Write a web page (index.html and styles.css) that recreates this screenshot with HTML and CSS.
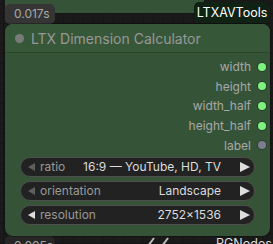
FILE: index.html
```html
<!DOCTYPE html>
<html lang="en">
<head>
    <meta charset="UTF-8">
    <meta name="viewport" content="width=device-width, initial-scale=1.0">
    <title>LTX Dimension Calculator</title>
    <link rel="stylesheet" href="styles.css">
</head>
<body>
    <div class="canvas">
        <div class="node node-above"></div>
        <div class="timing timing-top">0.017s</div>
        <div class="pack-badge">LTXAVTools</div>

        <div class="timing timing-bottom">0.005s</div>
        <div class="pack-label">RGNodes</div>
        <svg class="links" width="40" height="10" viewBox="0 0 40 10">
            <line x1="2" y1="10" x2="8" y2="2" />
            <line x1="16" y1="10" x2="22" y2="2" />
        </svg>

        <div class="node main-node">
            <div class="node-title">
                <span class="title-dot"></span>
                <span>LTX Dimension Calculator</span>
            </div>
            <div class="outputs">
                <div class="output-row"><span>width</span><span class="slot"></span></div>
                <div class="output-row"><span>height</span><span class="slot"></span></div>
                <div class="output-row"><span>width_half</span><span class="slot"></span></div>
                <div class="output-row"><span>height_half</span><span class="slot"></span></div>
                <div class="output-row"><span>label</span><span class="slot slot-string"></span></div>
            </div>
            <div class="widgets">
                <div class="widget">
                    <svg class="arrow-left dim" width="7" height="8" viewBox="0 0 7 8"><polygon points="7,0 7,8 0,4" /></svg>
                    <span class="widget-label">ratio</span>
                    <span class="widget-value">16:9 — YouTube, HD, TV</span>
                    <svg class="arrow-right" width="10" height="10" viewBox="0 0 10 10"><polygon points="0,0 10,5 0,10" /></svg>
                </div>
                <div class="widget">
                    <svg class="arrow-left dim" width="7" height="8" viewBox="0 0 7 8"><polygon points="7,0 7,8 0,4" /></svg>
                    <span class="widget-label">orientation</span>
                    <span class="widget-value">Landscape</span>
                    <svg class="arrow-right" width="10" height="10" viewBox="0 0 10 10"><polygon points="0,0 10,5 0,10" /></svg>
                </div>
                <div class="widget">
                    <svg class="arrow-left" width="7" height="8" viewBox="0 0 7 8"><polygon points="7,0 7,8 0,4" /></svg>
                    <span class="widget-label">resolution</span>
                    <span class="widget-value">2752×1536</span>
                    <svg class="arrow-right" width="10" height="10" viewBox="0 0 10 10"><polygon points="0,0 10,5 0,10" /></svg>
                </div>
            </div>
        </div>
    </div>
</body>
</html>
```

FILE: styles.css
```css
:root {
    --canvas: #1a1a1a;
    --grid: #151515;
    --node-bg: #355437;
    --node-title: #375739;
    --node-edge: #2b442c;
    --text-dim: #a8a8a8;
    --widget-bg: #222222;
    --widget-border: #4e4e4e;
}

* {
    margin: 0;
    padding: 0;
    box-sizing: border-box;
}

body {
    width: 273px;
    height: 244px;
    overflow: hidden;
    background: var(--canvas);
    font-family: Inter, 'Noto Sans', sans-serif;
}

.canvas {
    position: relative;
    width: 273px;
    height: 244px;
    overflow: hidden;
    background-color: var(--canvas);
    background-image:
        linear-gradient(var(--grid) 1px, transparent 1px),
        linear-gradient(90deg, var(--grid) 1px, transparent 1px);
    background-size: 10px 10px;
    background-position: 3px 3px;
}

/* nodes sit on the free canvas */
.node {
    position: absolute;
    background: var(--node-bg);
    border-radius: 8px;
}

.node-above {
    left: 5px;
    top: -20px;
    width: 199px;
    height: 33px;
}

.main-node {
    left: 5px;
    top: 24px;
    width: 265px;
    height: 212px;
    display: flex;
    flex-direction: column;
    box-shadow: 0 0 0 1px rgba(0,0,0,0.25);
}

.node-title {
    height: 28px;
    background: var(--node-title);
    border-radius: 8px 8px 0 0;
    border-bottom: 1px solid var(--node-edge);
    display: flex;
    align-items: center;
    gap: 7px;
    padding-left: 10px;
    color: #979797;
    font-size: 14px;
    box-sizing: content-box;
}

.title-dot {
    width: 9px;
    height: 9px;
    border-radius: 50%;
    background: #7a7a7a;
}

.outputs {
    padding-top: 4px;
    display: flex;
    flex-direction: column;
}

.output-row {
    height: 19.6px;
    display: flex;
    align-items: center;
    justify-content: flex-end;
    gap: 7px;
    padding-right: 4px;
    color: var(--text-dim);
    font-size: 12px;
}

.slot {
    width: 8px;
    height: 8px;
    border-radius: 50%;
    background: #7ef27e;
    box-shadow: 0 0 0 1px #2a3f2a;
}

.slot-string {
    background: #7e7c92;
}

.widgets {
    margin-top: 2px;
    padding: 0 15px;
    display: flex;
    flex-direction: column;
    gap: 4px;
}

.widget {
    height: 20px;
    background: var(--widget-bg);
    border: 1px solid var(--widget-border);
    border-radius: 10px;
    display: flex;
    align-items: center;
    padding: 0 4px 0 7px;
    font-size: 12px;
}

.arrow-left {
    fill: #dddddd;
    margin-right: 5px;
}

.arrow-left.dim {
    fill: #5e5e5e;
}

.arrow-right {
    fill: #dddddd;
    margin-left: 19px;
}

.widget-label {
    color: #999999;
    flex: 1;
}

.widget-value {
    color: #dcdcdc;
    white-space: nowrap;
}

/* badges over the canvas */
.timing {
    position: absolute;
    left: 5px;
    width: 50px;
    height: 20px;
    background: #353535;
    border-radius: 5px;
    color: #a8a8a8;
    font-size: 12px;
    line-height: 20px;
    padding-left: 9px;
}

.timing-top {
    top: 4px;
}

.timing-bottom {
    top: 236px;
    background: #262626;
}

.pack-badge {
    position: absolute;
    left: 194px;
    top: 2px;
    width: 76px;
    height: 21px;
    background: #0f2214;
    border-radius: 5px;
    color: #ffffff;
    font-size: 12.5px;
    line-height: 21px;
    text-align: center;
}

.pack-label {
    position: absolute;
    left: 216px;
    top: 236px;
    color: #dddddd;
    font-size: 12.5px;
}

.links {
    position: absolute;
    left: 146px;
    top: 236px;
    stroke: #bbbbbb;
    stroke-width: 2;
}
```
